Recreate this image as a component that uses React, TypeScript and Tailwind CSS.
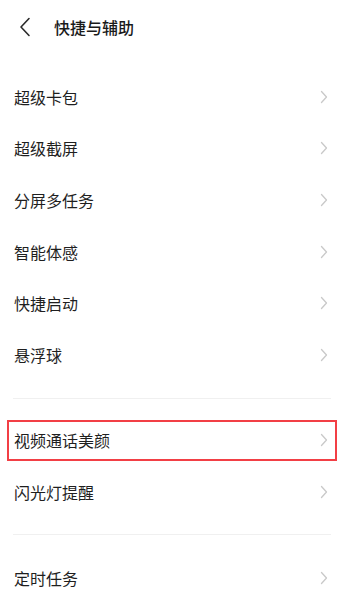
import React from "react";

const Chevron = () => (
  <svg width="8" height="14" viewBox="0 0 8 14" fill="none">
    <path d="M1.5 1.5L6.5 7L1.5 12.5" stroke="#c9c9c9" strokeWidth="1.3" strokeLinecap="round" strokeLinejoin="round" />
  </svg>
);

const Row = ({ label, boxed }: { label: string; boxed?: boolean }) => (
  <div className="relative flex h-[51.6px] items-center justify-between pl-[14px] pr-[16px]">
    <span className="text-[16px] leading-none text-[#1f1f1f]">{label}</span>
    <Chevron />
    {boxed && (
      <div className="pointer-events-none absolute left-[7px] right-[7px] top-[5px] bottom-[5px] border-2 border-[#f23f45]" />
    )}
  </div>
);

export default function App() {
  return (
    <div
      className="h-[600px] w-[344px] overflow-hidden bg-white"
      style={{ fontFamily: '"Noto Sans CJK SC", "Noto Sans", sans-serif' }}
    >
      <div className="flex h-[54px] items-center pl-[19px]">
        <svg width="12" height="20" viewBox="0 0 12 20" fill="none">
          <path d="M10 1.5L2 10L10 18.5" stroke="#2a2a2a" strokeWidth="1.6" strokeLinecap="round" strokeLinejoin="round" />
        </svg>
        <span className="ml-[23px] text-[16px] font-medium leading-none text-[#1a1a1a]">快捷与辅助</span>
      </div>
      <div className="pt-[17px]">
        <Row label="超级卡包" />
        <Row label="超级截屏" />
        <Row label="分屏多任务" />
        <Row label="智能体感" />
        <Row label="快捷启动" />
        <Row label="悬浮球" />
      </div>
      <div className="mx-[13px] mt-[17px] h-px bg-[#f0f0f0]" />
      <div className="pt-[16px]">
        <Row label="视频通话美颜" boxed />
        <Row label="闪光灯提醒" />
      </div>
      <div className="mx-[13px] mt-[16px] h-px bg-[#f0f0f0]" />
      <div className="pt-[17px]">
        <Row label="定时任务" />
      </div>
    </div>
  );
}
